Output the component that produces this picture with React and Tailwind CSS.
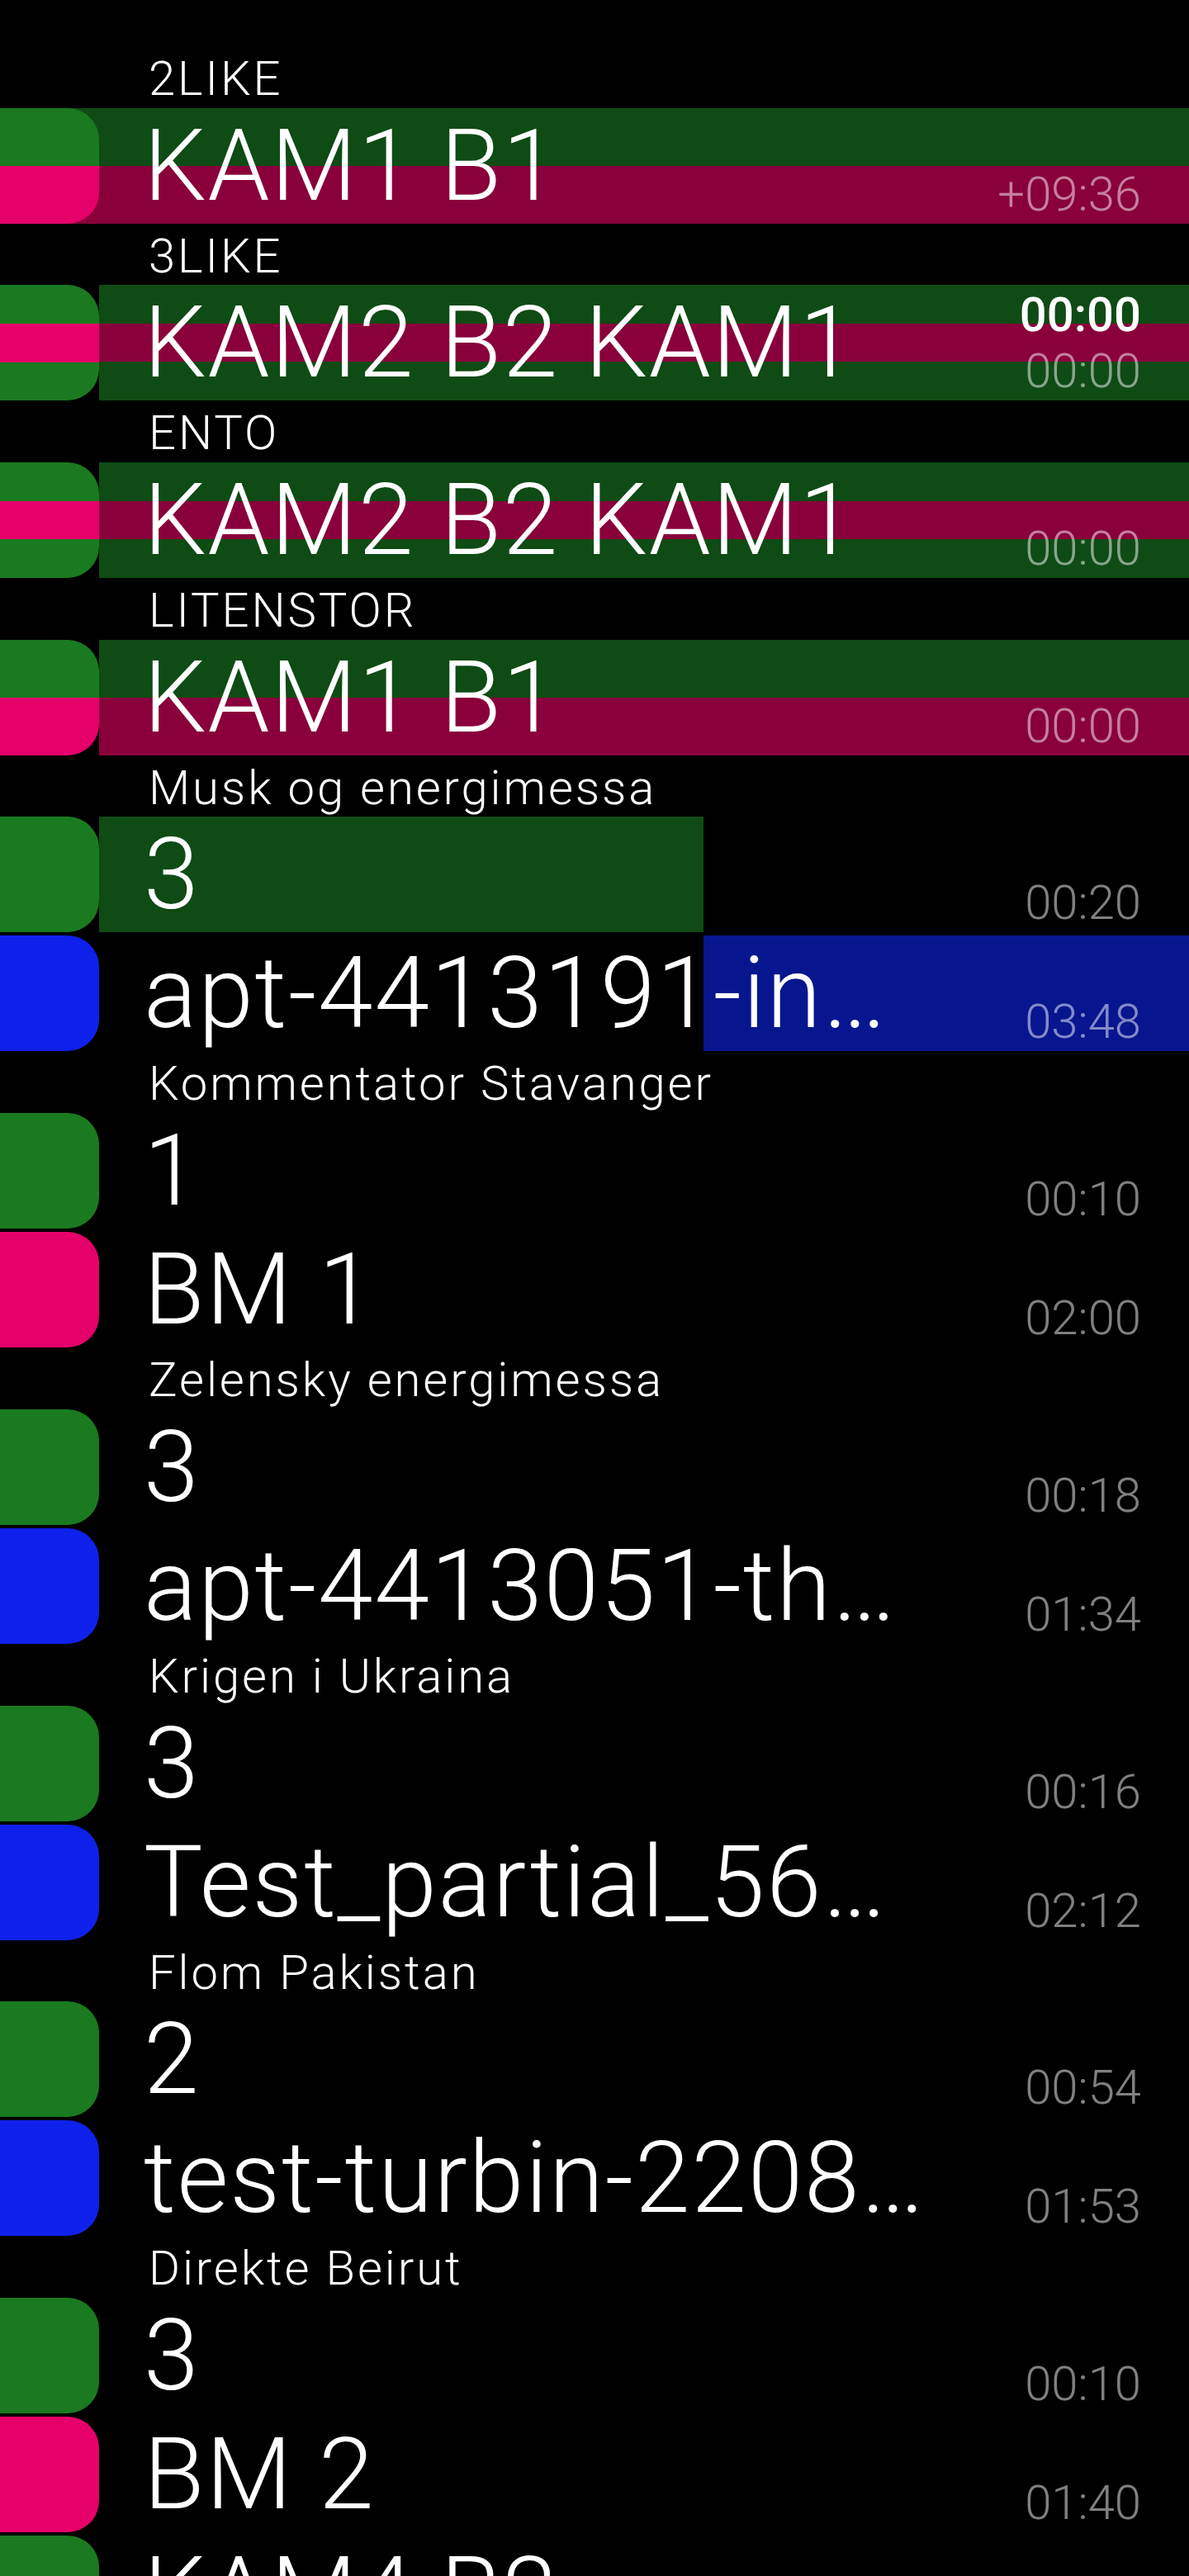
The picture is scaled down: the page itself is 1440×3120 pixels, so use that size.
const STRIPE = {
  g: 'bg-[#1a7a1f]',
  p: 'bg-[#e6006a]',
  b: 'bg-[#0e21ea]',
};

const BAR_HALF = 'bg-[linear-gradient(#0f4b15_50%,#89003b_50%)]';
const BAR_THIRD =
  'bg-[linear-gradient(#0f4b15_33.33%,#89003b_33.33%,#89003b_66.67%,#0f4b15_66.67%)]';
const BAR_GREEN_LEFT = 'bg-[linear-gradient(to_right,#0f4b15_732px,transparent_732px)]';
const BAR_BLUE_RIGHT = 'bg-[linear-gradient(to_right,transparent_732px,#07168f_732px)]';

const groups = [
  {
    title: '2LIKE',
    rows: [{ label: 'KAM1 B1', stripes: ['g', 'p'], rowBg: BAR_HALF, times: ['+09:36'] }],
  },
  {
    title: '3LIKE',
    rows: [
      {
        label: 'KAM2 B2 KAM1',
        stripes: ['g', 'p', 'g'],
        bar: BAR_THIRD,
        current: '00:00',
        times: ['00:00'],
      },
    ],
  },
  {
    title: 'ENTO',
    rows: [{ label: 'KAM2 B2 KAM1', stripes: ['g', 'p', 'g'], bar: BAR_THIRD, times: ['00:00'] }],
  },
  {
    title: 'LITENSTOR',
    rows: [{ label: 'KAM1 B1', stripes: ['g', 'p'], bar: BAR_HALF, times: ['00:00'] }],
  },
  {
    title: 'Musk og energimessa',
    rows: [
      { label: '3', stripes: ['g'], bar: BAR_GREEN_LEFT, times: ['00:20'] },
      { label: 'apt-4413191-innslag', stripes: ['b'], bar: BAR_BLUE_RIGHT, times: ['03:48'] },
    ],
  },
  {
    title: 'Kommentator Stavanger',
    rows: [
      { label: '1', stripes: ['g'], times: ['00:10'] },
      { label: 'BM 1', stripes: ['p'], times: ['02:00'] },
    ],
  },
  {
    title: 'Zelensky energimessa',
    rows: [
      { label: '3', stripes: ['g'], times: ['00:18'] },
      { label: 'apt-4413051-thema', stripes: ['b'], times: ['01:34'] },
    ],
  },
  {
    title: 'Krigen i Ukraina',
    rows: [
      { label: '3', stripes: ['g'], times: ['00:16'] },
      { label: 'Test_partial_5621_final', stripes: ['b'], times: ['02:12'] },
    ],
  },
  {
    title: 'Flom Pakistan',
    rows: [
      { label: '2', stripes: ['g'], times: ['00:54'] },
      { label: 'test-turbin-22082022', stripes: ['b'], times: ['01:53'] },
    ],
  },
  {
    title: 'Direkte Beirut',
    rows: [
      { label: '3', stripes: ['g'], times: ['00:10'] },
      { label: 'BM 2', stripes: ['p'], times: ['01:40'] },
      { label: 'KAM4 B2', stripes: ['g', 'p'], times: ['00:00'] },
    ],
  },
];

function Row({ row }) {
  return (
    <div className={`flex h-[140px] mb-[4px] ${row.rowBg || ''}`}>
      {/* source colour tab */}
      <div className="flex w-[120px] shrink-0 flex-col overflow-hidden rounded-r-[38px]">
        {row.stripes.map((s, i) => (
          <div key={i} className={`flex-1 ${STRIPE[s]}`} />
        ))}
      </div>

      <div className={`flex min-w-0 flex-1 ${row.bar || ''}`}>
        <div className="w-[1004px] shrink-0 truncate pl-[54px] text-[120px] leading-[140px] tracking-[1.8px] font-light text-white">
          {row.label}
        </div>
        <div className="flex flex-1 flex-col items-end justify-end pb-[2px] pr-[58px] text-[58px] leading-[68px] font-light">
          {row.current && <span className="font-medium text-white">{row.current}</span>}
          {row.times.map((t, i) => (
            <span key={i} className="text-white/50">
              {t}
            </span>
          ))}
        </div>
      </div>
    </div>
  );
}

export default function App() {
  return (
    <div
      className="h-[3120px] overflow-hidden bg-black pt-[60px] text-white"
      style={{ fontFamily: 'Roboto, "Noto Sans", sans-serif' }}
    >
      {groups.map((g) => (
        <section key={g.title}>
          <h2 className="h-[70.7px] pl-[180px] text-[58px] leading-[70.7px] tracking-[2.9px] font-light text-white">
            {g.title}
          </h2>
          {g.rows.map((r, i) => (
            <Row key={i} row={r} />
          ))}
        </section>
      ))}
    </div>
  );
}
